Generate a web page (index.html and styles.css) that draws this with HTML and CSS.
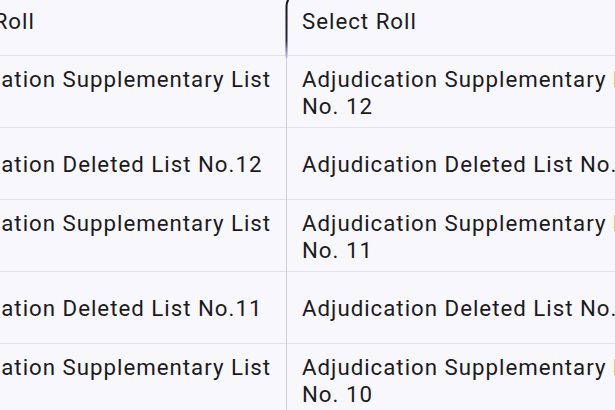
FILE: index.html
```html
<!DOCTYPE html>
<html>
<head>
<meta charset="utf-8">
<link rel="stylesheet" href="styles.css">
</head>
<body>
<div class="split">
  <section class="pane pane-left">
    <div class="pane-head">Select Roll</div>
    <ul class="roll-list">
      <li class="roll">Adjudication Supplementary List No. 12</li>
      <li class="roll">Adjudication Deleted List No.12</li>
      <li class="roll">Adjudication Supplementary List No. 11</li>
      <li class="roll">Adjudication Deleted List No.11</li>
      <li class="roll">Adjudication Supplementary List No. 10</li>
    </ul>
  </section>
  <section class="pane pane-right">
    <div class="pane-head">Select Roll</div>
    <ul class="roll-list">
      <li class="roll">Adjudication Supplementary List No. 12</li>
      <li class="roll">Adjudication Deleted List No.12</li>
      <li class="roll">Adjudication Supplementary List No. 11</li>
      <li class="roll">Adjudication Deleted List No.11</li>
      <li class="roll">Adjudication Supplementary List No. 10</li>
    </ul>
  </section>
  <svg class="edge" width="8" height="60" viewBox="0 0 8 60">
    <defs>
      <linearGradient id="eg" x1="0" y1="0" x2="0" y2="1">
        <stop offset="0" stop-color="#111114"/>
        <stop offset="0.7" stop-color="#2a2838"/>
        <stop offset="0.85" stop-color="#7b74c4"/>
        <stop offset="1" stop-color="#c9c7d0"/>
      </linearGradient>
    </defs>
    <path d="M4.5 0 Q2.5 2 2.5 7 L2.5 58" fill="none" stroke="url(#eg)" stroke-width="2"/>
  </svg>
</div>
</body>
</html>
```
FILE: styles.css
```css
html, body {
  margin: 0;
  padding: 0;
  width: 615px;
  height: 410px;
  overflow: hidden;
  background: #f8f7fc;
}

.split {
  position: relative;
  display: flex;
  margin-left: -96px;
  font-family: Roboto, "Noto Sans", sans-serif;
  font-size: 22.25px;
  letter-spacing: 1px;
  color: #1b1a20;
}

.pane {
  flex: none;
  width: 382px;
  background: #f8f7fc;
}

.pane-left {
  border-right: 1px solid #cfcdd5;
}

.pane-right {
  width: 390px;
}

.pane-right .pane-head,
.pane-right .roll {
  padding-left: 15px;
}

.pane-head {
  box-sizing: border-box;
  height: 56px;
  padding: 7px 16px 0;
  line-height: 28px;
  border-bottom: 1px solid #e3e1e8;
}

.roll-list {
  list-style: none;
  margin: 0;
  padding: 0;
}

.roll {
  box-sizing: border-box;
  min-height: 72px;
  display: flex;
  align-items: center;
  padding: 9px 0 7px 16px;
  line-height: 27px;
  border-bottom: 1px solid #e3e1e8;
}

.edge {
  position: absolute;
  left: 380px;
  top: 0;
}
```
